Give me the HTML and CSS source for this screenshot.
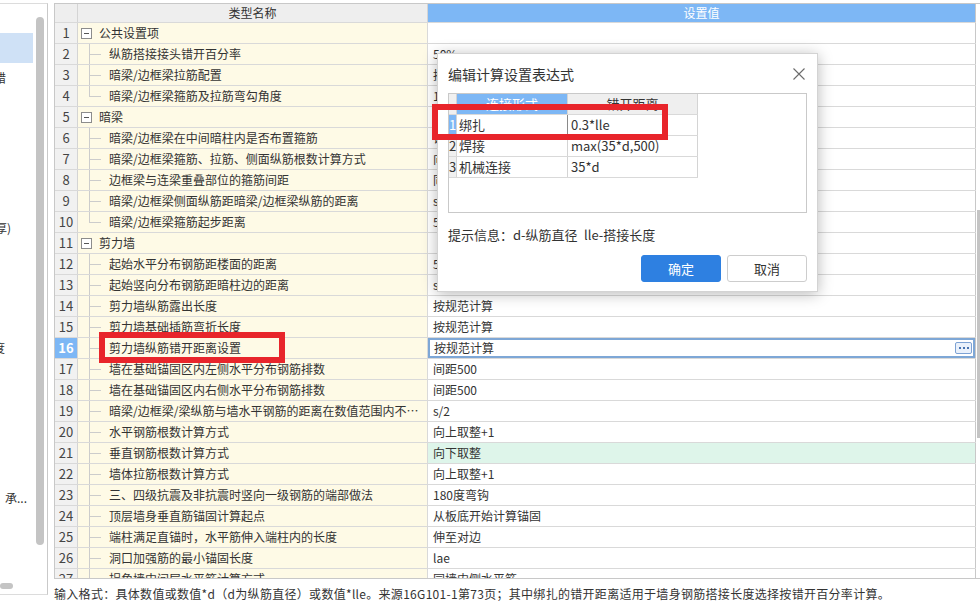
FILE: index.html
```html
<!DOCTYPE html>
<html lang="zh-CN">
<head>
<meta charset="utf-8">
<title>计算设置</title>
<link rel="stylesheet" href="styles.css">
</head>
<body>
<div class="app">
  <aside class="tree-panel">
    <div class="tree-body">
      <ul class="tree-list">
        <li class="tree-item active"></li>
        <li class="tree-item"><span class="frag f1">错</span></li>
        <li class="tree-item"></li>
        <li class="tree-item"></li>
        <li class="tree-item"></li>
        <li class="tree-item"></li>
        <li class="tree-item"><span class="frag f2">厚)</span></li>
        <li class="tree-item"></li>
        <li class="tree-item"></li>
        <li class="tree-item"></li>
        <li class="tree-item"><span class="frag f3">度</span></li>
        <li class="tree-item"></li>
        <li class="tree-item"></li>
        <li class="tree-item"></li>
        <li class="tree-item"></li>
        <li class="tree-item"><span class="frag f4">承...</span></li>
      </ul>
      <div class="vscroll"><div class="vthumb"></div></div>
    </div>
    <div class="hscroll"><div class="hthumb"></div></div>
  </aside>

  <main class="main">
    <div class="grid-wrap">
      <div class="grid">
        <div class="hrow">
          <div class="num hcell"></div>
          <div class="name-h">类型名称</div>
          <div class="val-h">设置值</div>
        </div>

        <div class="row"><div class="num">1</div><div class="name"><span class="toggle"></span><span class="label">公共设置项</span></div><div class="val"></div></div>
        <div class="row"><div class="num">2</div><div class="name"><span class="branch"></span><span class="label">纵筋搭接接头错开百分率</span></div><div class="val">50%</div></div>
        <div class="row"><div class="num">3</div><div class="name"><span class="branch"></span><span class="label">暗梁/边框梁拉筋配置</span></div><div class="val">按规范计算</div></div>
        <div class="row"><div class="num">4</div><div class="name"><span class="branch last"></span><span class="label">暗梁/边框梁箍筋及拉筋弯勾角度</span></div><div class="val">135°</div></div>
        <div class="row"><div class="num">5</div><div class="name"><span class="toggle"></span><span class="label">暗梁</span></div><div class="val"></div></div>
        <div class="row"><div class="num">6</div><div class="name"><span class="branch"></span><span class="label">暗梁/边框梁在中间暗柱内是否布置箍筋</span></div><div class="val">计算</div></div>
        <div class="row"><div class="num">7</div><div class="name"><span class="branch"></span><span class="label">暗梁/边框梁箍筋、拉筋、侧面纵筋根数计算方式</span></div><div class="val">向上取整+1</div></div>
        <div class="row"><div class="num">8</div><div class="name"><span class="branch"></span><span class="label">边框梁与连梁重叠部位的箍筋间距</span></div><div class="val">同连梁</div></div>
        <div class="row"><div class="num">9</div><div class="name"><span class="branch"></span><span class="label">暗梁/边框梁侧面纵筋距暗梁/边框梁纵筋的距离</span></div><div class="val">s</div></div>
        <div class="row"><div class="num">10</div><div class="name"><span class="branch last"></span><span class="label">暗梁/边框梁箍筋起步距离</span></div><div class="val">50</div></div>
        <div class="row"><div class="num">11</div><div class="name"><span class="toggle"></span><span class="label">剪力墙</span></div><div class="val"></div></div>
        <div class="row"><div class="num">12</div><div class="name"><span class="branch"></span><span class="label">起始水平分布钢筋距楼面的距离</span></div><div class="val">50</div></div>
        <div class="row"><div class="num">13</div><div class="name"><span class="branch"></span><span class="label">起始竖向分布钢筋距暗柱边的距离</span></div><div class="val">s</div></div>
        <div class="row"><div class="num">14</div><div class="name"><span class="branch"></span><span class="label">剪力墙纵筋露出长度</span></div><div class="val">按规范计算</div></div>
        <div class="row"><div class="num">15</div><div class="name"><span class="branch"></span><span class="label">剪力墙基础插筋弯折长度</span></div><div class="val">按规范计算</div></div>
        <div class="row"><div class="num sel">16</div><div class="name"><span class="branch"></span><span class="label">剪力墙纵筋错开距离设置</span></div><div class="val editing"><span class="edit-text">按规范计算</span><span class="more"><i></i><i></i><i></i></span></div></div>
        <div class="row"><div class="num">17</div><div class="name"><span class="branch"></span><span class="label">墙在基础锚固区内左侧水平分布钢筋排数</span></div><div class="val">间距500</div></div>
        <div class="row"><div class="num">18</div><div class="name"><span class="branch"></span><span class="label">墙在基础锚固区内右侧水平分布钢筋排数</span></div><div class="val">间距500</div></div>
        <div class="row"><div class="num">19</div><div class="name"><span class="branch"></span><span class="label">暗梁/边框梁/梁纵筋与墙水平钢筋的距离在数值范围内不调整</span></div><div class="val">s/2</div></div>
        <div class="row"><div class="num">20</div><div class="name"><span class="branch"></span><span class="label">水平钢筋根数计算方式</span></div><div class="val">向上取整+1</div></div>
        <div class="row"><div class="num">21</div><div class="name"><span class="branch"></span><span class="label">垂直钢筋根数计算方式</span></div><div class="val green">向下取整</div></div>
        <div class="row"><div class="num">22</div><div class="name"><span class="branch"></span><span class="label">墙体拉筋根数计算方式</span></div><div class="val">向上取整+1</div></div>
        <div class="row"><div class="num">23</div><div class="name"><span class="branch"></span><span class="label">三、四级抗震及非抗震时竖向一级钢筋的端部做法</span></div><div class="val">180度弯钩</div></div>
        <div class="row"><div class="num">24</div><div class="name"><span class="branch"></span><span class="label">顶层墙身垂直筋锚固计算起点</span></div><div class="val">从板底开始计算锚固</div></div>
        <div class="row"><div class="num">25</div><div class="name"><span class="branch"></span><span class="label">端柱满足直锚时，水平筋伸入端柱内的长度</span></div><div class="val">伸至对边</div></div>
        <div class="row"><div class="num">26</div><div class="name"><span class="branch"></span><span class="label">洞口加强筋的最小锚固长度</span></div><div class="val">lae</div></div>
        <div class="row"><div class="num">27</div><div class="name"><span class="branch"></span><span class="label">拐角墙中间层水平筋计算方式</span></div><div class="val">同墙内侧水平筋</div></div>
      </div>
      <div class="vbar"><div class="vbar-thumb"></div></div>
    </div>
    <div class="footer">输入格式：具体数值或数值*d（d为纵筋直径）或数值*lle。来源16G101-1第73页；其中绑扎的错开距离适用于墙身钢筋搭接长度选择按错开百分率计算。</div>

    <div class="dialog">
      <div class="dlg-title">
        <span>编辑计算设置表达式</span>
        <svg class="close" width="12" height="12" viewBox="0 0 12 12"><path d="M0.5 0.5 L11.5 11.5 M11.5 0.5 L0.5 11.5" stroke="#6b6b6b" stroke-width="1.1" fill="none"/></svg>
      </div>
      <div class="xgrid">
        <div class="xrow xhead">
          <div class="xrn"></div>
          <div class="xc1 blue">连接形式</div>
          <div class="xc2">错开距离</div>
        </div>
        <div class="xrow">
          <div class="xrn xsel">1</div>
          <div class="xc1">绑扎</div>
          <div class="xc2 active">0.3*lle</div>
        </div>
        <div class="xrow">
          <div class="xrn">2</div>
          <div class="xc1">焊接</div>
          <div class="xc2">max(35*d,500)</div>
        </div>
        <div class="xrow">
          <div class="xrn">3</div>
          <div class="xc1">机械连接</div>
          <div class="xc2">35*d</div>
        </div>
      </div>
      <div class="hint">提示信息：d-纵筋直径&ensp;lle-搭接长度</div>
      <div class="buttons">
        <button class="btn primary">确定</button>
        <button class="btn">取消</button>
      </div>
    </div>

    <div class="mark mark-row"></div>
    <div class="mark mark-dlg"></div>
  </main>
</div>
</body>
</html>
```

FILE: styles.css
```css
html, body {
  margin: 0;
  padding: 0;
}
body {
  width: 980px;
  height: 609px;
  overflow: hidden;
  background: #ffffff;
  color: #333333;
  font-family: "Noto Sans CJK SC", "Microsoft YaHei", sans-serif;
  font-size: 12px;
}
.app {
  display: flex;
  height: 609px;
}

/* left tree panel */
.tree-panel {
  width: 48px;
  height: 592px;
  margin-top: 3px;
  box-sizing: border-box;
  border-top: 1px solid #dcdcdc;
  border-right: 1px solid #c9c9c9;
  border-bottom: 1px solid #dcdcdc;
  background: #ffffff;
  display: flex;
  flex-direction: column;
  overflow: hidden;
}
.tree-body {
  flex: 1;
  display: flex;
  min-height: 0;
}
.tree-list {
  list-style: none;
  margin: 0;
  padding: 29px 0 0 0;
  width: 34px;
  overflow: hidden;
}
.tree-item {
  height: 30px;
  width: 33px;
  line-height: 30px;
  white-space: nowrap;
  overflow: hidden;
}
.tree-item.active {
  background: #cfe1f6;
}
.frag {
  display: block;
}
.f1 { margin-left: -6px; }
.f2 { margin-left: -5px; }
.f3 { margin-left: -7px; }
.f4 { margin-left: 5px; }
.vscroll {
  width: 13px;
  padding-top: 13px;
}
.vthumb {
  margin-left: 2px;
  width: 8px;
  height: 528px;
  border-radius: 4px;
  background: #c4c4c4;
}
.hscroll {
  height: 14px;
  padding-top: 3px;
  box-sizing: border-box;
}
.hthumb {
  width: 13px;
  height: 6px;
  border-radius: 3px;
  background: #c4c4c4;
}

/* main table */
.main {
  position: relative;
  width: 926px;
  margin-left: 6px;
  display: flex;
  flex-direction: column;
}
.grid-wrap {
  margin-top: 3px;
  height: 576px;
  box-sizing: border-box;
  border-top: 1px solid #c8c8c8;
  border-bottom: 1px solid #c8c8c8;
  display: flex;
}
.grid {
  width: 922px;
  box-sizing: border-box;
  border-left: 1px solid #c8c8c8;
  overflow: hidden;
}
.hrow, .row {
  display: flex;
  box-sizing: border-box;
  border-bottom: 1px solid #d9d9d9;
}
.hrow {
  height: 19px;
  line-height: 18px;
}
.row {
  height: 21px;
  line-height: 20px;
}
.num {
  width: 23px;
  flex: none;
  box-sizing: border-box;
  border-right: 1px solid #d4d4d4;
  background: #f1f1f1;
  text-align: center;
  font-size: 13px;
  color: #444444;
}
.num.hcell {
  background: #eeeeee;
}
.num.sel {
  background: #7db7f5;
  color: #ffffff;
  font-weight: bold;
}
.name-h {
  width: 350px;
  flex: none;
  box-sizing: border-box;
  border-right: 1px solid #d4d4d4;
  background: #eeeeee;
  text-align: center;
}
.val-h {
  width: 548px;
  flex: none;
  box-sizing: border-box;
  border-right: 1px solid #c8c8c8;
  background: #7db7f5;
  color: #ffffff;
  text-align: center;
}
.name {
  width: 350px;
  flex: none;
  box-sizing: border-box;
  border-right: 1px solid #d9d9d9;
  background: #fefae6;
  display: flex;
  align-items: center;
  overflow: hidden;
}
.label {
  flex: 1;
  min-width: 0;
  white-space: nowrap;
  overflow: hidden;
  text-overflow: ellipsis;
  padding-right: 8px;
}
.toggle {
  flex: none;
  width: 11px;
  height: 11px;
  box-sizing: border-box;
  margin: 0 7px 0 3px;
  border: 1px solid #8c8c8c;
  background: linear-gradient(#555555, #555555) center / 5px 1px no-repeat, #ffffff;
}
.branch {
  flex: none;
  align-self: stretch;
  width: 12px;
  margin: 0 8px 0 11px;
  background-image: linear-gradient(#cccccc, #cccccc), linear-gradient(#cccccc, #cccccc);
  background-repeat: no-repeat;
  background-position: 0 0, 0 50%;
  background-size: 1px 100%, 100% 1px;
}
.branch.last {
  background-size: 1px 50%, 100% 1px;
}
.val {
  width: 548px;
  flex: none;
  box-sizing: border-box;
  border-right: 1px solid #c8c8c8;
  padding-left: 5px;
  background: #ffffff;
  white-space: nowrap;
  overflow: hidden;
}
.val.green {
  background: #def5ea;
}
.val.editing {
  display: flex;
  align-items: center;
  box-shadow: inset 0 0 0 2px #7ea7d6;
  padding-left: 6px;
}
.edit-text {
  flex: 1;
}
.more {
  flex: none;
  width: 17px;
  height: 12px;
  margin-right: 3px;
  box-sizing: border-box;
  border: 1px solid #7da2d4;
  border-radius: 2px;
  background: #eaf1fb;
  display: flex;
  align-items: center;
  justify-content: center;
  gap: 2px;
}
.more i {
  display: block;
  width: 2px;
  height: 2px;
  background: #4a74b0;
}
.vbar {
  width: 4px;
  padding-top: 206px;
  box-sizing: border-box;
}
.vbar-thumb {
  margin-left: 1px;
  width: 3px;
  height: 228px;
  background: #c4c4c4;
}
.footer {
  margin-top: 7px;
  line-height: 16px;
  white-space: nowrap;
  letter-spacing: 0.3px;
  color: #333333;
}

/* dialog */
.dialog {
  position: absolute;
  left: 383px;
  top: 53px;
  width: 381px;
  height: 239px;
  box-sizing: border-box;
  padding: 0 10px;
  background: #ffffff;
  border: 1px solid #d3d3d3;
  box-shadow: 0 2px 14px rgba(0, 0, 0, 0.28);
  display: flex;
  flex-direction: column;
}
.dlg-title {
  height: 39px;
  display: flex;
  align-items: center;
  justify-content: space-between;
  font-size: 14px;
  color: #333333;
}
.close {
  margin-right: 2px;
}
.xgrid {
  height: 120px;
  box-sizing: border-box;
  border: 1px solid #c9c9c9;
  font-size: 13px;
}
.xrow {
  display: flex;
  height: 21px;
  line-height: 20px;
  box-sizing: border-box;
  border-bottom: 1px solid #d9d9d9;
  width: 249px;
}
.xhead {
  height: 21px;
}
.xrn {
  width: 8px;
  flex: none;
  box-sizing: border-box;
  border-right: 1px solid #d4d4d4;
  background: #f0f0f0;
  overflow: hidden;
  font-size: 13px;
}
.xrn.xsel {
  background: #7db7f5;
  color: #ffffff;
}
.xc1 {
  width: 111px;
  flex: none;
  box-sizing: border-box;
  border-right: 1px solid #d4d4d4;
  padding-left: 2px;
  white-space: nowrap;
}
.xc2 {
  width: 130px;
  flex: none;
  box-sizing: border-box;
  border-right: 1px solid #d4d4d4;
  padding-left: 3px;
  white-space: nowrap;
}
.xc2.active {
  border-left: 1px solid #8a8a8a;
  margin-left: -1px;
  width: 131px;
}
.xhead .xc1 {
  background: #7db7f5;
  color: #ffffff;
  text-align: center;
  padding: 0;
}
.xhead .xc2 {
  background: #efefef;
  text-align: center;
  padding: 0;
}
.hint {
  margin-top: 13px;
  line-height: 18px;
  font-size: 13px;
  color: #333333;
}
.buttons {
  margin-top: 11px;
  display: flex;
  justify-content: flex-end;
  gap: 6px;
}
.btn {
  width: 80px;
  height: 27px;
  box-sizing: border-box;
  border: 1px solid #cdcdcd;
  border-radius: 3px;
  background: #ffffff;
  color: #333333;
  font-family: "Noto Sans CJK SC", sans-serif;
  font-size: 13px;
  padding: 0;
}
.btn.primary {
  background: #2e80e1;
  border-color: #2e80e1;
  color: #ffffff;
}

/* red annotation boxes */
.mark {
  position: absolute;
  box-sizing: border-box;
  border: 6px solid #e8252b;
}
.mark-row {
  left: 45px;
  top: 332px;
  width: 186px;
  height: 31px;
}
.mark-dlg {
  left: 378px;
  top: 104px;
  width: 236px;
  height: 36px;
}
```
